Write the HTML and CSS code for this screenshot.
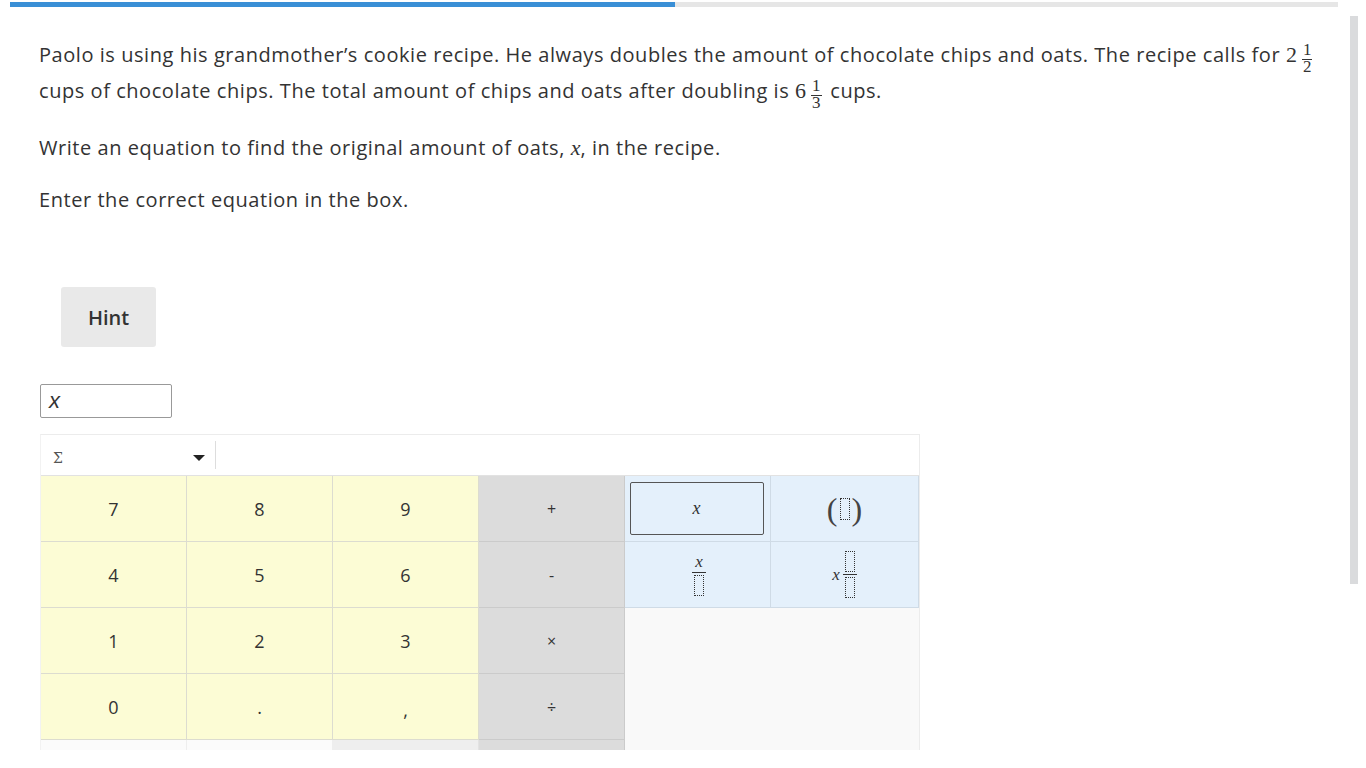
FILE: index.html
```html
<!DOCTYPE html>
<html>
<head>
<meta charset="utf-8">
<link rel="stylesheet" href="styles.css">
</head>
<body>
<div class="progress"><div class="progress-fill"></div></div>
<div class="scrollbar"></div>
<main class="content">
  <p class="para first">Paolo is using his grandmother’s cookie recipe. He always doubles the amount of chocolate chips and oats. The recipe calls for <span class="math">2<span class="frac"><span class="num">1</span><span class="den">2</span></span></span> cups of chocolate chips. The total amount of chips and oats after doubling is <span class="math">6<span class="frac"><span class="num">1</span><span class="den">3</span></span></span> cups.</p>
  <p class="para">Write an equation to find the original amount of oats, <span class="mvar">x</span>, in the recipe.</p>
  <p class="para">Enter the correct equation in the box.</p>

  <button class="hint">Hint</button>

  <div class="answer"><span class="answer-x">x</span></div>

  <div class="keyboard">
    <div class="toolbar">
      <div class="sigma">Σ</div>
      <div class="caret"></div>
      <div class="sep"></div>
    </div>
    <div class="keys">
      <div class="key num">7</div>
      <div class="key num">8</div>
      <div class="key num">9</div>
      <div class="key op">+</div>
      <div class="key var"><span class="focusbox"><span class="ix">x</span></span></div>
      <div class="key var"><span class="paren">(</span><span class="dot tall"></span><span class="paren">)</span></div>

      <div class="key num">4</div>
      <div class="key num">5</div>
      <div class="key num">6</div>
      <div class="key op">-</div>
      <div class="key var"><span class="tfrac"><span class="ix small">x</span><span class="tbar"></span><span class="dot"></span></span></div>
      <div class="key var"><span class="ix small">x</span><span class="tfrac"><span class="dot"></span><span class="tbar"></span><span class="dot"></span></span></div>

      <div class="key num">1</div>
      <div class="key num">2</div>
      <div class="key num">3</div>
      <div class="key op">×</div>
      <div class="blank"></div>

      <div class="key num">0</div>
      <div class="key num">.</div>
      <div class="key num comma">,</div>
      <div class="key op">÷</div>

      <div class="key white"></div>
      <div class="key white"></div>
      <div class="key lgrey"></div>
      <div class="key op"></div>
    </div>
  </div>
</main>
</body>
</html>
```

FILE: styles.css
```css
* { box-sizing: border-box; }
html, body { margin: 0; padding: 0; background: #fff; }
body {
  font-family: "Open Sans", Roboto, "Liberation Sans", sans-serif;
  color: #333;
  height: 768px;
  overflow: hidden;
  position: relative;
}
.progress {
  margin: 2px 0 0 10px;
  width: 1328px;
  height: 5px;
  background: #e6e6e6;
}
.progress-fill {
  width: 665px;
  height: 5px;
  background: #3a8fd6;
}
.scrollbar {
  position: absolute;
  left: 1350px;
  top: 16px;
  width: 8px;
  height: 568px;
  background: #dadbdd;
}
.content {
  padding: 30px 0 0 39px;
  width: 1330px;
}
.para {
  margin: 0 0 16px 0;
  font-size: 20px;
  line-height: 36px;
  letter-spacing: 0.55px;
}
.para.first { margin-bottom: 21px; }
.math {
  font-family: "Liberation Serif", "DejaVu Serif", serif;
  font-size: 22px;
  line-height: 10px;
  letter-spacing: 0;
  white-space: nowrap;
}
.frac {
  display: inline-flex;
  flex-direction: column;
  align-items: center;
  vertical-align: 7px;
  margin: 0 3px 0 5px;
  font-size: 17px;
  line-height: 14px;
}
.frac .num {
  padding: 0 1px 2px;
  border-bottom: 1px solid #333;
}
.frac .den { padding-top: 1px; line-height: 12px; }
.mvar {
  font-family: "Liberation Serif", "DejaVu Serif", serif;
  font-style: italic;
  font-size: 22px;
  line-height: 10px;
  letter-spacing: 0;
}
.hint {
  display: block;
  margin: 69px 0 0 22px;
  width: 95px;
  height: 60px;
  border: none;
  border-radius: 3px;
  background: #e9e9e9;
  font-family: "Open Sans", Roboto, sans-serif;
  font-size: 20px;
  font-weight: 600;
  color: #333;
}
.answer {
  margin: 37px 0 0 1px;
  width: 132px;
  height: 34px;
  border: 1px solid #999;
  border-radius: 2px;
  padding: 0 0 0 8px;
  display: flex;
  align-items: center;
}
.answer-x {
  font-family: "Liberation Sans", sans-serif;
  font-style: italic;
  font-size: 22px;
  color: #333;
}
.keyboard {
  margin: 16px 0 0 1px;
  width: 880px;
  height: 316px;
  overflow: hidden;
  border-top: 1px solid #ececec;
  border-left: 1px solid #f2f2f2;
  border-right: 1px solid #ececec;
}
.toolbar {
  height: 41px;
  display: flex;
  align-items: center;
  border-bottom: 1px solid #e2e2e2;
  background: #fff;
}
.sigma {
  font-family: "DejaVu Serif", serif;
  font-size: 14px;
  color: #555;
  margin: 6px 0 0 12px;
}
.caret {
  margin: 6px 0 0 130px;
  width: 0;
  height: 0;
  border-left: 6px solid transparent;
  border-right: 6px solid transparent;
  border-top: 6px solid #222;
}
.sep {
  margin-left: 10px;
  width: 1px;
  height: 28px;
  background: #ddd;
}
.keys {
  display: grid;
  grid-template-columns: 146px 146px 146px 146px 146px 148px;
  grid-auto-rows: 66px;
}
.key {
  display: flex;
  align-items: center;
  justify-content: center;
  border-right: 1px solid #dcdcd0;
  border-bottom: 1px solid #dcdcd0;
  font-size: 18px;
  color: #333;
}
.key.num { background: #fcfcd5; }
.key.op {
  background: #dcdcdc;
  border-color: #cbcbcb;
  font-size: 16px;
}
.key.var {
  background: #e4f0fb;
  border-color: #cfdbe6;
}
.key.white { background: #fbfbfb; border-color: #eee; }
.key.lgrey { background: #eeeeee; border-color: #e2e2e2; }
.key.comma { padding-top: 6px; }
.blank {
  grid-column: 5 / 7;
  grid-row: 3 / 6;
  background: #f9f9f9;
}
.focusbox {
  width: 134px;
  height: 53px;
  border: 1px solid #555;
  border-radius: 2px;
  display: flex;
  align-items: center;
  justify-content: center;
  margin-right: 2px;
}
.ix {
  font-family: "Liberation Serif", "DejaVu Serif", serif;
  font-style: italic;
  font-size: 18px;
  color: #333;
}
.ix.small { font-size: 17px; line-height: 17px; }
.paren {
  font-family: "Liberation Serif", serif;
  font-size: 32px;
  color: #444;
  line-height: 32px;
}
.dot {
  display: block;
  width: 10px;
  height: 21px;
  border: 1px dotted #333;
}
.dot.tall { display: inline-block; width: 10px; height: 22px; margin: 0 2px; }
.tfrac {
  display: inline-flex;
  flex-direction: column;
  align-items: center;
  margin-left: 3px;
}
.tbar {
  width: 14px;
  height: 1px;
  background: #333;
  margin: 2px 0 2px;
}
```
